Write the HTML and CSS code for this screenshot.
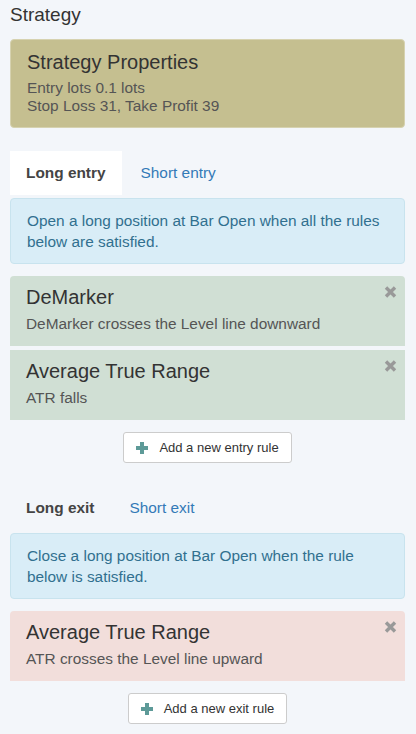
FILE: index.html
```html
<!DOCTYPE html>
<html lang="en">
<head>
    <meta charset="UTF-8">
    <meta name="viewport" content="width=device-width, initial-scale=1.0">
    <title>Strategy</title>
    <link rel="stylesheet" href="styles.css">
</head>
<body>

    <div class="strategy">
        <h1 class="page-title">Strategy</h1>

        <!-- Properties -->
        <div class="properties">
            <h3>Strategy Properties</h3>
            <p>Entry lots 0.1 lots</p>
            <p>Stop Loss 31, Take Profit 39</p>
        </div>

        <!-- Entry rules -->
        <div class="tabs">
            <span class="tab active">Long entry</span>
            <span class="tab">Short entry</span>
        </div>

        <div class="info">Open a long position at Bar Open when all the rules below are satisfied.</div>

        <div class="rules">
            <div class="rule entry first">
                <span class="remove">
                    <svg width="13" height="12" viewBox="0 0 13 12"><path d="M2 1.5 L11 10.5 M11 1.5 L2 10.5" stroke="#999" stroke-width="3.4"/></svg>
                </span>
                <h4>DeMarker</h4>
                <p>DeMarker crosses the Level line downward</p>
            </div>
            <div class="rule entry">
                <span class="remove">
                    <svg width="13" height="12" viewBox="0 0 13 12"><path d="M2 1.5 L11 10.5 M11 1.5 L2 10.5" stroke="#999" stroke-width="3.4"/></svg>
                </span>
                <h4>Average True Range</h4>
                <p>ATR falls</p>
            </div>
        </div>

        <div class="add-row">
            <button class="add-btn">
                <svg width="12" height="12" viewBox="0 0 12 12"><path d="M6 0 V12 M0 6 H12" stroke="#5d9a98" stroke-width="4"/></svg>
                Add a new entry rule
            </button>
        </div>

        <!-- Exit rules -->
        <div class="tabs">
            <span class="tab plain">Long exit</span>
            <span class="tab">Short exit</span>
        </div>

        <div class="info">Close a long position at Bar Open when the rule below is satisfied.</div>

        <div class="rules">
            <div class="rule exit first">
                <span class="remove">
                    <svg width="13" height="12" viewBox="0 0 13 12"><path d="M2 1.5 L11 10.5 M11 1.5 L2 10.5" stroke="#999" stroke-width="3.4"/></svg>
                </span>
                <h4>Average True Range</h4>
                <p>ATR crosses the Level line upward</p>
            </div>
        </div>

        <div class="add-row">
            <button class="add-btn">
                <svg width="12" height="12" viewBox="0 0 12 12"><path d="M6 0 V12 M0 6 H12" stroke="#5d9a98" stroke-width="4"/></svg>
                Add a new exit rule
            </button>
        </div>
    </div>

</body>
</html>
```

FILE: styles.css
```css
/* Page */
body {
    background-color: #f3f6fa;
    font-family: 'Liberation Sans', Arial, sans-serif;
    font-size: 15.4px;
    color: #333;
    margin: 0;
}

.strategy {
    padding: 0 11px 0 10px;
}

.page-title {
    font-size: 19px;
    font-weight: normal;
    line-height: 24px;
    margin: 0;
    padding: 3px 0 12px;
    color: #333;
}

/* Properties panel */
.properties {
    background-color: #c5bf90;
    border: 1px solid #d6d2b0;
    border-radius: 4px;
    padding: 10px 16px 12px;
}

.properties h3 {
    font-size: 20px;
    font-weight: normal;
    line-height: 24px;
    margin: 0 0 5px;
    color: #333;
}

.properties p {
    margin: 0;
    line-height: 18px;
    color: #555;
}

/* Tabs */
.tabs {
    display: flex;
    margin-top: 23px;
}

.tab {
    padding: 0 16px;
    line-height: 44px;
    color: #337ab7;
    margin-right: 3px;
}

.tab.active, .tab.plain {
    color: #444;
    font-weight: bold;
}

.tab.active {
    background-color: #fff;
}

/* Info box */
.info {
    margin-top: 3px;
    background-color: #d9edf7;
    border: 1px solid #c8e3ee;
    border-radius: 4px;
    padding: 11px 16px;
    color: #31708f;
    line-height: 21px;
}

/* Rules */
.rules {
    margin-top: 12px;
    display: flex;
    flex-direction: column;
    gap: 4px;
}

.rule {
    position: relative;
    padding: 9px 16px 13px;
}

.rule.first {
    border-radius: 4px 4px 0 0;
}

.rule.entry {
    background-color: #d0dfd4;
}

.rule.exit {
    background-color: #f2dedb;
}

.rule h4 {
    font-size: 20px;
    font-weight: normal;
    line-height: 24px;
    margin: 0 0 6px;
    color: #333;
}

.rule p {
    margin: 0;
    line-height: 18px;
    color: #555;
}

.remove {
    position: absolute;
    top: 10px;
    right: 8px;
    width: 13px;
    height: 12px;
    cursor: pointer;
}

.remove svg {
    display: block;
}

/* Add button */
.add-row {
    display: flex;
    justify-content: center;
    margin-top: 12px;
}

.add-btn {
    display: flex;
    align-items: center;
    gap: 11px;
    height: 31px;
    padding: 0 12px;
    background-color: #fff;
    border: 1px solid #ccc;
    border-radius: 3px;
    font-family: inherit;
    font-size: 13px;
    color: #333;
    cursor: pointer;
}

.add-btn:hover {
    background-color: #e6e6e6;
}
```
